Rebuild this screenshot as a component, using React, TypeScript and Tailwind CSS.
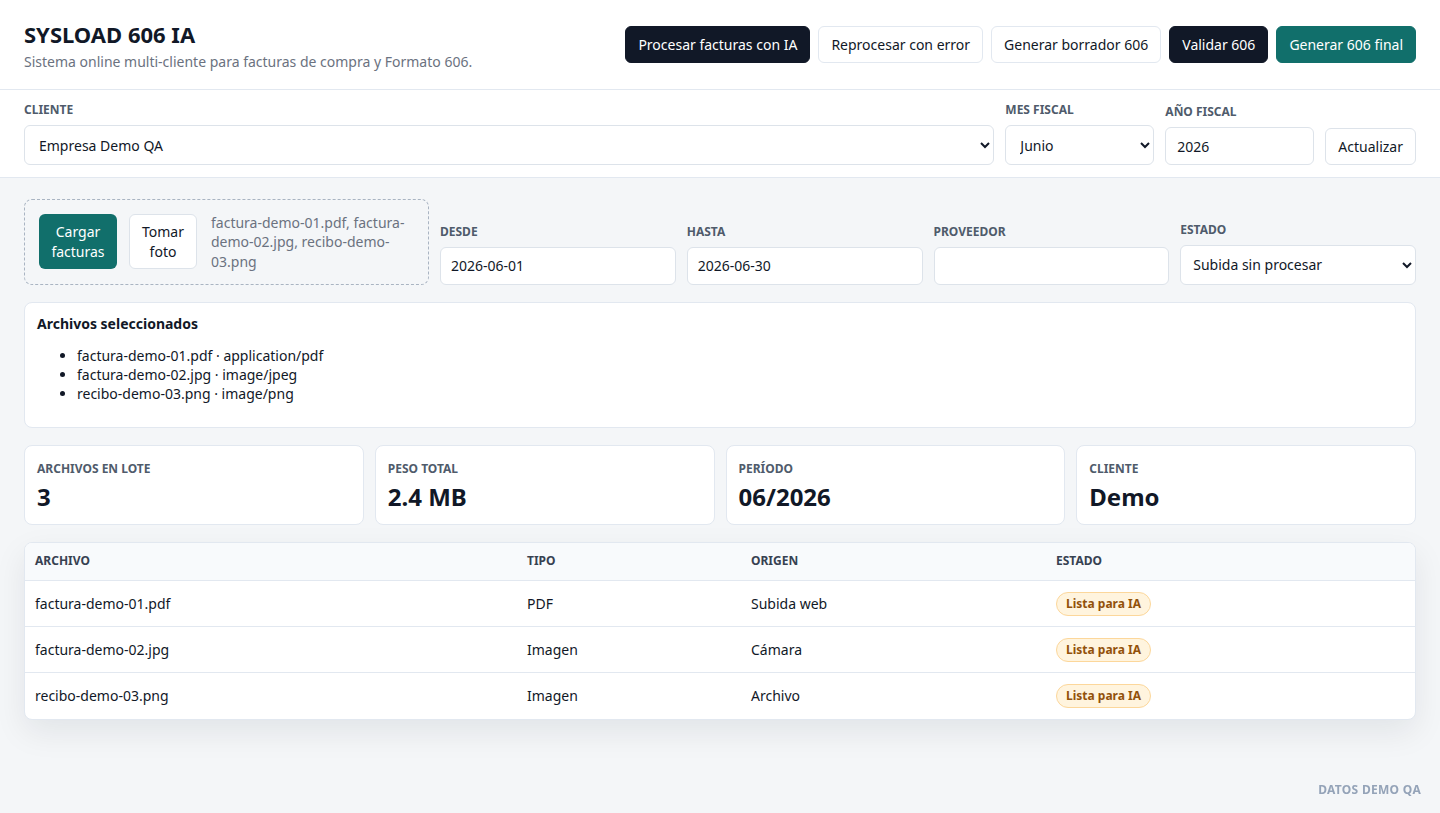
import React from "react";

const files = [
  { name: "factura-demo-01.pdf", mime: "application/pdf", tipo: "PDF", origen: "Subida web" },
  { name: "factura-demo-02.jpg", mime: "image/jpeg", tipo: "Imagen", origen: "Cámara" },
  { name: "recibo-demo-03.png", mime: "image/png", tipo: "Imagen", origen: "Archivo" },
];

const stats = [
  { label: "Archivos en lote", value: "3" },
  { label: "Peso total", value: "2.4 MB" },
  { label: "Período", value: "06/2026" },
  { label: "Cliente", value: "Demo" },
];

const Label: React.FC<{ children: React.ReactNode }> = ({ children }) => (
  <label className="block text-xs font-bold uppercase text-[#4f5b6b] mb-[7px]">{children}</label>
);

const btnBase = "h-[37px] px-3 rounded-md text-sm border whitespace-nowrap";

export default function App() {
  return (
    <div className="min-h-screen bg-[#f4f6f8] text-[#111827]" style={{ fontFamily: '"Noto Sans", sans-serif' }}>
      {/* header */}
      <header className="bg-white border-b border-[#e2e8f0] px-6 pt-5 pb-[17px] flex items-center justify-between">
        <div>
          <h1 className="text-[22px] font-bold leading-7 text-[#111827]">SYSLOAD 606 IA</h1>
          <p className="mt-1 text-sm text-[#6b7280]">Sistema online multi-cliente para facturas de compra y Formato 606.</p>
        </div>
        <div className="flex gap-2 -mt-[3px]">
          <button className={`${btnBase} bg-[#111827] border-[#111827] text-white`}>Procesar facturas con IA</button>
          <button className={`${btnBase} bg-white border-[#e2e8f0] text-[#111827]`}>Reprocesar con error</button>
          <button className={`${btnBase} bg-white border-[#e2e8f0] text-[#111827]`}>Generar borrador 606</button>
          <button className={`${btnBase} bg-[#111827] border-[#111827] text-white`}>Validar 606</button>
          <button className={`${btnBase} bg-[#116f6b] border-[#116f6b] text-white`}>Generar 606 final</button>
        </div>
      </header>

      {/* filters */}
      <div className="bg-white border-b border-[#e2e8f0] px-6 pt-3 pb-[12px] flex items-end gap-[11px]">
        <div className="flex-1">
          <Label>Cliente</Label>
          <select className="w-full h-10 px-[10px] border border-[#dde3ea] rounded-md bg-white text-sm">
            <option>Empresa Demo QA</option>
          </select>
        </div>
        <div className="w-[149px]">
          <Label>Mes fiscal</Label>
          <select className="w-full h-10 px-[10px] border border-[#dde3ea] rounded-md bg-white text-sm">
            <option>Junio</option>
          </select>
        </div>
        <div className="w-[149px]">
          <Label>Año fiscal</Label>
          <input
            defaultValue="2026"
            className="w-full h-[38px] px-[11px] border border-[#dde3ea] rounded-md bg-white text-sm"
          />
        </div>
        <button className="h-[37px] px-[12px] border border-[#dde3ea] rounded-md bg-white text-sm">Actualizar</button>
      </div>

      <main className="px-6 pt-[21px] pb-5 flex flex-col gap-[17px]">
        {/* upload + filters */}
        <div className="grid grid-cols-[405px_1fr_1fr_1fr_1fr] gap-[11px] items-end">
          <div className="border border-dashed border-[#a9b4c2] rounded-lg px-[14px] py-[12.5px] flex items-center gap-3">
            <button className="w-[78px] h-[55px] rounded-md bg-[#116f6b] text-white text-sm leading-[19.5px] shrink-0">
              Cargar facturas
            </button>
            <button className="w-[68px] h-[55px] rounded-md bg-white border border-[#dde3ea] text-sm leading-[19.5px] shrink-0">
              Tomar foto
            </button>
            <p className="ml-[2px] text-sm leading-[19.5px] text-[#6b7280]">
              factura-demo-01.pdf, factura-demo-02.jpg, recibo-demo-03.png
            </p>
          </div>
          <div>
            <Label>Desde</Label>
            <input defaultValue="2026-06-01" className="w-full h-[38px] px-[10px] border border-[#dde3ea] rounded-md bg-white text-sm" />
          </div>
          <div>
            <Label>Hasta</Label>
            <input defaultValue="2026-06-30" className="w-full h-[38px] px-[10px] border border-[#dde3ea] rounded-md bg-white text-sm" />
          </div>
          <div>
            <Label>Proveedor</Label>
            <input className="w-full h-[38px] px-[10px] border border-[#dde3ea] rounded-md bg-white text-sm" />
          </div>
          <div>
            <Label>Estado</Label>
            <select className="w-full h-10 px-[8px] border border-[#dde3ea] rounded-md bg-white text-sm">
              <option>Subida sin procesar</option>
            </select>
          </div>
        </div>

        {/* selected files */}
        <div className="bg-white border border-[#e2e8f0] rounded-lg px-3 pt-[11px] pb-6">
          <h2 className="text-sm font-bold leading-5">Archivos seleccionados</h2>
          <ul className="mt-3 list-disc pl-10 text-sm leading-[19px]">
            {files.map((f) => (
              <li key={f.name}>
                {f.name} · {f.mime}
              </li>
            ))}
          </ul>
        </div>

        {/* stats */}
        <div className="grid grid-cols-4 gap-[11px]">
          {stats.map((s) => (
            <div key={s.label} className="bg-white border border-[#e2e8f0] rounded-lg px-3 pt-[15px] pb-3 h-[80px]">
              <div className="text-xs font-bold uppercase text-[#4f5b6b] leading-4">{s.label}</div>
              <div className="mt-1 text-2xl font-bold leading-8 text-[#111827]">{s.value}</div>
            </div>
          ))}
        </div>

        {/* table */}
        <div className="bg-white border border-[#e2e8f0] rounded-lg overflow-hidden shadow-[0_12px_32px_rgba(15,23,42,0.08)]">
          <table className="w-full text-left border-collapse table-fixed">
            <colgroup>
              <col className="w-[492px]" />
              <col className="w-[224px]" />
              <col className="w-[305px]" />
              <col />
            </colgroup>
            <thead>
              <tr className="bg-[#f8fafc] h-[38px]">
                {["Archivo", "Tipo", "Origen", "Estado"].map((h) => (
                  <th key={h} className="px-[10px] text-xs font-bold uppercase text-[#374151] border-b border-[#e2e8f0]">
                    {h}
                  </th>
                ))}
              </tr>
            </thead>
            <tbody>
              {files.map((f, i) => (
                <tr key={f.name} className={`h-[46px] text-sm ${i > 0 ? "border-t border-[#e2e8f0]" : ""}`}>
                  <td className="px-[10px]">{f.name}</td>
                  <td className="px-[10px]">{f.tipo}</td>
                  <td className="px-[10px]">{f.origen}</td>
                  <td className="px-[10px]">
                    <span className="inline-block rounded-full border border-[#fcd79b] bg-[#fff4de] px-[9px] py-[3px] text-xs font-bold leading-4 text-[#92510a]">
                      Lista para IA
                    </span>
                  </td>
                </tr>
              ))}
            </tbody>
          </table>
        </div>
      </main>

      <div className="fixed bottom-[15px] right-[19px] text-xs font-bold uppercase tracking-wide text-[#94a3b8]">
        Datos demo QA
      </div>
    </div>
  );
}
